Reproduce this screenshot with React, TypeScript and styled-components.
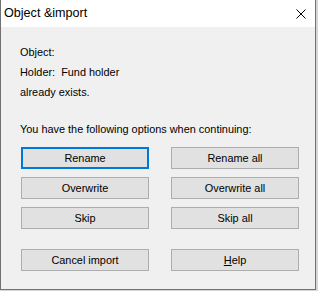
import React from 'react';
import styled, { createGlobalStyle } from 'styled-components';

const GlobalStyle = createGlobalStyle`
  html, body {
    margin: 0;
    padding: 0;
    background: #d6d6d6;
  }
  body {
    font-family: 'Liberation Sans', Arial, sans-serif;
    font-size: 10.9px;
    color: #000;
  }
`;

const Window = styled.div`
  width: 314px;
  height: 289px;
  display: flex;
  flex-direction: column;
  background: #f0f0f0;
  border: 1px solid #717171;
  border-top: none;
`;

const TitleBar = styled.div`
  height: 27px;
  flex: none;
  display: flex;
  align-items: center;
  justify-content: space-between;
  background: #fff;
  padding-left: 3px;
`;

const TitleText = styled.span`
  font-size: 12.6px;
  line-height: 27px;
`;

const CloseButton = styled.div`
  width: 28px;
  height: 27px;
  display: flex;
  align-items: center;
  justify-content: center;
`;

const Body = styled.div`
  flex: 1;
  padding: 15px 0 0 19px;
`;

const Line = styled.div`
  line-height: 20px;
  white-space: nowrap;
`;

const Label = styled.span`
  margin-right: 3px;
`;

const Prompt = styled(Line)`
  margin-top: 17px;
`;

const ButtonGrid = styled.div<{ $top: number }>`
  display: grid;
  grid-template-columns: 128px 128px;
  grid-auto-rows: 22px;
  column-gap: 22px;
  row-gap: 8px;
  margin: ${({ $top }) => $top}px 0 0 1px;
`;

const Button = styled.button<{ $focused?: boolean }>`
  box-sizing: border-box;
  height: 22px;
  margin: 0;
  padding: 0;
  font: inherit;
  color: #000;
  background: #e1e1e1;
  border: ${({ $focused }) => ($focused ? '2px solid #0078d7' : '1px solid #adadad')};
  border-radius: 0;
  outline: none;
  line-height: 1;
  cursor: default;
`;

const Mnemonic = styled.span`
  text-decoration: underline;
`;

const CloseIcon = () => (
  <svg width="10" height="10" viewBox="0 0 10 10">
    <path d="M0.5 0.5 L9.5 9.5 M9.5 0.5 L0.5 9.5" stroke="#000" strokeWidth="1" fill="none" />
  </svg>
);

const App: React.FC = () => {
  return (
    <>
      <GlobalStyle />
      <Window>
        <TitleBar>
          <TitleText>Object &amp;import</TitleText>
          <CloseButton>
            <CloseIcon />
          </CloseButton>
        </TitleBar>
        <Body>
          <Line>Object:</Line>
          <Line>
            <Label>Holder:</Label> Fund holder
          </Line>
          <Line>already exists.</Line>
          <Prompt>You have the following options when continuing:</Prompt>
          <ButtonGrid $top={8}>
            <Button $focused>Rename</Button>
            <Button>Rename all</Button>
            <Button>Overwrite</Button>
            <Button>Overwrite all</Button>
            <Button>Skip</Button>
            <Button>Skip all</Button>
          </ButtonGrid>
          <ButtonGrid $top={20}>
            <Button>Cancel import</Button>
            <Button>
              <Mnemonic>H</Mnemonic>elp
            </Button>
          </ButtonGrid>
        </Body>
      </Window>
    </>
  );
};

export default App;
